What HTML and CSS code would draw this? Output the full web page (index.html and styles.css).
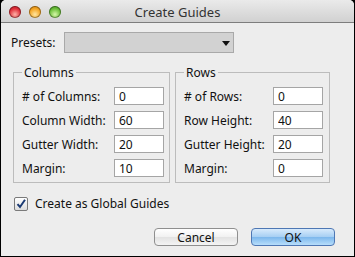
FILE: index.html
```html
<!DOCTYPE html>
<html lang="en">
<head>
    <meta charset="UTF-8">
    <title>Create Guides</title>
    <link rel="stylesheet" href="styles.css">
</head>
<body>
    <div class="window">
        <div class="titlebar">
            <div class="lights">
                <span class="light red"></span>
                <span class="light yellow"></span>
                <span class="light green"></span>
            </div>
            <div class="title">Create Guides</div>
        </div>

        <div class="content">
            <div class="presets">
                <label>Presets:</label>
                <div class="select"><span class="arrow"></span></div>
            </div>

            <div class="groups">
                <fieldset class="group cols">
                    <legend>Columns</legend>
                    <div class="row"><label># of Columns:</label><input type="text" value="0"></div>
                    <div class="row"><label>Column Width:</label><input type="text" value="60"></div>
                    <div class="row"><label>Gutter Width:</label><input type="text" value="20"></div>
                    <div class="row"><label>Margin:</label><input type="text" value="10"></div>
                </fieldset>
                <fieldset class="group rows">
                    <legend>Rows</legend>
                    <div class="row"><label># of Rows:</label><input type="text" value="0"></div>
                    <div class="row"><label>Row Height:</label><input type="text" value="40"></div>
                    <div class="row"><label>Gutter Height:</label><input type="text" value="20"></div>
                    <div class="row"><label>Margin:</label><input type="text" value="0"></div>
                </fieldset>
            </div>

            <div class="check">
                <span class="box">
                    <svg width="12" height="12" viewBox="0 0 12 12"><path d="M2.5 6.2 L5 9 L10 1.8" fill="none" stroke="#1b3a73" stroke-width="2"/></svg>
                </span>
                <span>Create as Global Guides</span>
            </div>

            <div class="buttons">
                <button class="btn">Cancel</button>
                <button class="btn ok">OK</button>
            </div>
        </div>
    </div>
</body>
</html>
```

FILE: styles.css
```css
body {
    margin: 0;
    padding: 0;
    background: #000;
    font-family: "Lucida Grande", "Noto Sans", sans-serif;
    font-size: 12px;
    color: #111;
}
.window {
    width: 353px;
    height: 256px;
    margin-left: 1px;
    background: #ededed;
    border-radius: 5px 5px 0 0;
    overflow: hidden;
    display: flex;
    flex-direction: column;
}
.titlebar {
    height: 22px;
    position: relative;
    background: linear-gradient(#eaeaea, #d1d1d1);
    border-bottom: 1px solid #7d7d7d;
    display: flex;
    align-items: center;
    justify-content: center;
}
.lights {
    position: absolute;
    left: 8px;
    top: 6px;
    display: flex;
    gap: 8px;
}
.light {
    width: 12px;
    height: 12px;
    border-radius: 50%;
    box-shadow: inset 0 0 0 1px rgba(0, 0, 0, 0.35);
}
.red { background: radial-gradient(circle at 50% 70%, #ffb3a8, #e0303a 55%, #a5121d); }
.yellow { background: radial-gradient(circle at 50% 70%, #ffe6a0, #f4a524 55%, #b86e08); }
.green { background: radial-gradient(circle at 50% 70%, #d6f7a8, #6cbf3a 55%, #2f7d14); }
.title {
    font-size: 13px;
    color: #333;
    margin-top: 1px;
}
.content {
    flex: 1;
    padding: 9px 10px 0 10px;
    display: flex;
    flex-direction: column;
}
.presets {
    display: flex;
    align-items: center;
    gap: 8px;
}
.select {
    width: 168px;
    height: 19px;
    background: #d2d2d2;
    border: 1px solid #a9a9a9;
    position: relative;
}
.arrow {
    position: absolute;
    right: 3px;
    top: 8px;
    border-left: 4px solid transparent;
    border-right: 4px solid transparent;
    border-top: 5px solid #111;
}
.groups {
    display: flex;
    gap: 5px;
    margin-top: 11px;
    margin-left: 2px;
}
fieldset.group {
    margin: 0;
    border: 1px solid #bcbcbc;
    padding: 6px 0 5px 8px;
    display: flex;
    flex-direction: column;
    gap: 6px;
}
.cols { width: 157px; box-sizing: border-box; }
.rows { width: 155px; box-sizing: border-box; }
legend {
    padding: 0 2px;
    margin-left: 0;
    font-size: 12px;
}
.row {
    display: flex;
    align-items: center;
    height: 18px;
}
.cols .row label { width: 92px; }
.rows .row label { width: 89px; }
.row input {
    width: 50px;
    height: 18px;
    box-sizing: border-box;
    border: 1px solid #a5a5a5;
    background: #fff;
    padding: 0 0 0 4px;
    font-family: inherit;
    font-size: 12px;
    color: #111;
}
.check {
    display: flex;
    align-items: center;
    gap: 7px;
    margin-top: 12px;
    margin-left: 3px;
}
.box {
    width: 12px;
    height: 12px;
    border: 1px solid #7a7a7a;
    border-radius: 2px;
    background: linear-gradient(#fff, #dcdcdc);
    display: flex;
    align-items: center;
    justify-content: center;
}
.buttons {
    display: flex;
    justify-content: flex-end;
    gap: 13px;
    margin-top: 16px;
    padding-right: 9px;
}
.btn {
    width: 84px;
    height: 18px;
    border: 1px solid #8f8f8f;
    border-radius: 4px;
    background: linear-gradient(#ffffff, #f1f1f1 50%, #e2e2e2 51%, #f4f4f4);
    font-family: inherit;
    font-size: 12px;
    color: #111;
    padding: 0;
}
.btn.ok {
    border-color: #4e77b4;
    background: linear-gradient(#d8ebfc, #a6cff3 50%, #7cb7ec 51%, #b7defb);
}
```
